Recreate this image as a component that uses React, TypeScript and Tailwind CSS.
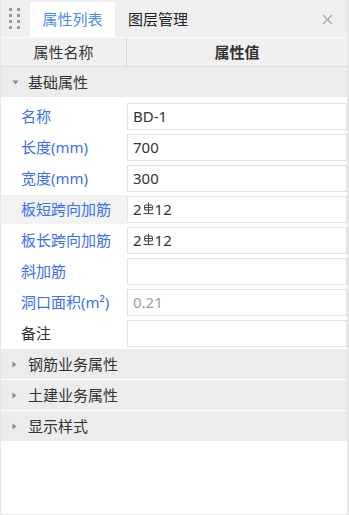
import React from 'react';

type Row = {
  label: React.ReactNode;
  value?: React.ReactNode;
  blue?: boolean;
  muted?: boolean;
  highlight?: boolean;
};

// HRB400 rebar grade symbol, drawn since no font has it
const Rebar = () => (
  <svg width="11" height="13" viewBox="0 0 11 13" className="inline-block mx-[1px] -mt-[3px]" fill="none" stroke="#444" strokeWidth="1.05">
    <path d="M5.5 0.5 V11.5" />
    <rect x="1.6" y="3" width="7.8" height="5" rx="1.3" />
    <path d="M1.6 5.5 H9.4" />
    <path d="M0.5 11.6 H10.5" />
  </svg>
);

const rows: Row[] = [
  { label: '名称', value: 'BD-1', blue: true },
  { label: '长度(mm)', value: '700', blue: true },
  { label: '宽度(mm)', value: '300', blue: true },
  { label: '板短跨向加筋', value: <>2<Rebar />12</>, blue: true, highlight: true },
  { label: '板长跨向加筋', value: <>2<Rebar />12</>, blue: true },
  { label: '斜加筋', value: '', blue: true },
  { label: <>洞口面积(m²)</>, value: '0.21', blue: true, muted: true },
  { label: '备注', value: '' },
];

const Caret = ({ open }: { open?: boolean }) =>
  open ? (
    <svg width="7" height="5" viewBox="0 0 7 5" className="shrink-0">
      <path d="M0.5 0.5 H6.5 L3.5 4.5 Z" fill="#8a8a8a" />
    </svg>
  ) : (
    <svg width="5" height="7" viewBox="0 0 5 7" className="shrink-0">
      <path d="M0.5 0.5 V6.5 L4.5 3.5 Z" fill="#8a8a8a" />
    </svg>
  );

const GroupRow = ({ title, open }: { title: string; open?: boolean }) => (
  <div className="h-[30px] bg-[#ececec] flex items-center mb-[1px]">
    <div className={open ? 'w-[27px] flex justify-center pl-[1px]' : 'w-[27px] flex justify-center'}>
      <Caret open={open} />
    </div>
    <span className="text-[15px] text-[#333]">{title}</span>
  </div>
);

export default function App() {
  return (
    <div
      className="w-[349px] h-[515px] bg-white border-l border-r-2 border-b border-[#e6e6e6] flex flex-col overflow-hidden"
      style={{ fontFamily: '"Noto Sans", "Noto Sans CJK SC", sans-serif' }}
    >
      {/* Tab bar */}
      <div className="h-[37px] bg-[#efefef] flex items-end shrink-0">
        <div className="w-[29px] h-full grid grid-cols-2 content-center justify-center gap-x-[4px] gap-y-[3px] pl-[8px] pr-[10px]">
          {Array.from({ length: 8 }).map((_, i) => (
            <span key={i} className="w-[3px] h-[3px] bg-[#9a9a9a]" />
          ))}
        </div>
        <div className="h-[35px] w-[85px] bg-white flex items-center justify-center text-[15px] text-[#4a8cf0]">
          属性列表
        </div>
        <div className="h-[35px] px-[13px] flex items-center text-[15px] text-[#222]">图层管理</div>
        <div className="flex-1" />
        <div className="h-[35px] w-[30px] flex items-center justify-center mr-[5px]">
          <svg width="11" height="11" viewBox="0 0 11 11" stroke="#a8a8a8" strokeWidth="1.3">
            <path d="M1 1 L10 10 M10 1 L1 10" />
          </svg>
        </div>
      </div>

      {/* Column header */}
      <div className="h-[30px] grid grid-cols-[126px_1fr] bg-[#f0f0f0] border-t border-[#fafafa] border-b border-b-[#dcdcdc] shrink-0">
        <div className="flex items-center justify-center text-[15px] text-[#333] border-r border-[#d8d8d8]">属性名称</div>
        <div className="flex items-center justify-center text-[15px] font-bold text-[#333]">属性值</div>
      </div>

      <GroupRow title="基础属性" open />

      <div className="pt-[5px] pb-[2px]">
        {rows.map((r, i) => (
          <div key={i} className="grid grid-cols-[126px_1fr] h-[27px] mb-[4px] last:mb-0">
            <div
              className={
                'flex items-center pl-[20px] text-[15px] -my-[1px] ' +
                (r.highlight ? 'bg-[#f3f3f3] ' : '') +
                (r.blue ? 'text-[#3b6ef0]' : 'text-[#333]')
              }
            >
              {r.label}
            </div>
            <div
              className={
                'border border-[#e2e2e2] bg-white flex items-center pl-[5px] text-[15px] ' +
                (r.muted ? 'text-[#a0a0a0]' : 'text-[#333]')
              }
            >
              {r.value}
            </div>
          </div>
        ))}
      </div>

      <GroupRow title="钢筋业务属性" />
      <GroupRow title="土建业务属性" />
      <GroupRow title="显示样式" />

      <div className="flex-1 bg-white" />
    </div>
  );
}
